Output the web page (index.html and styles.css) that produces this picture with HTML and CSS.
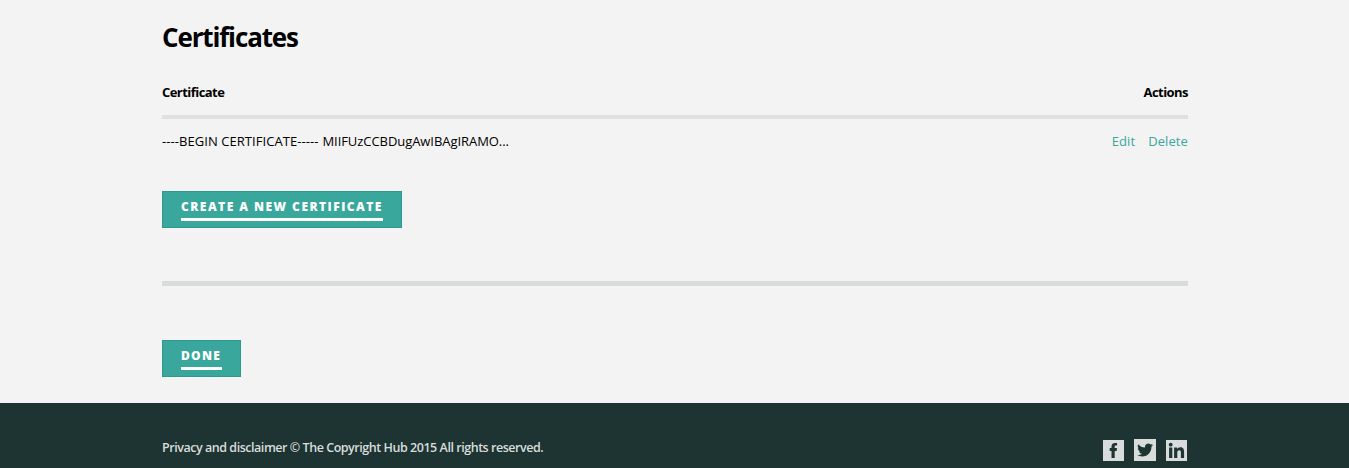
FILE: index.html
```html
<!DOCTYPE html>
<html lang="en">
<head>
<meta charset="utf-8">
<title>Certificates</title>
<link rel="stylesheet" href="styles.css">
</head>
<body>
<main class="content">
  <h1 class="title"><span>Certificates</span></h1>
  <div class="row head"><span class="head-cert">Certificate</span><span class="head-actions">Actions</span></div>
  <div class="row item">
    <span class="cert"><span class="begin">----BEGIN CERTIFICATE-----</span><span class="key">MIIFUzCCBDugAwIBAgIRAMO...</span></span>
    <span class="actions"><a class="edit">Edit</a><a class="delete">Delete</a></span>
  </div>
  <a class="button create"><span class="label">CREATE A NEW CERTIFICATE</span></a>
  <div class="rule"></div>
  <a class="button done"><span class="label">DONE</span></a>
</main>
<footer class="footer">
  <div class="footer-inner">
    <span class="legal">Privacy and disclaimer © The Copyright Hub 2015 All rights reserved.</span>
    <div class="social">
      <svg class="icon" viewBox="0 0 21 21"><path fill="#d8dddc" d="M0 0h21v21H0z"/><path fill="#1d3432" d="M8.5 17.9v-7H6.7V8.1h1.8V6.5c0-2.4 1.2-3.6 3.4-3.6h2.2v2.7h-1.4c-.8 0-1 .4-1 1v1.5h2.3l-.3 2.8h-2v7z"/></svg>
      <svg class="icon twitter" viewBox="0 0 22 22"><path fill="#d8dddc" d="M0 0h22v22H0z"/><path fill="#1d3432" transform="translate(3.2 3.1) scale(.66)" d="M23.95 4.57a10 10 0 0 1-2.82.78 4.96 4.96 0 0 0 2.16-2.73c-.95.56-2 .96-3.13 1.19a4.92 4.92 0 0 0-8.39 4.48C7.69 8.1 4.07 6.13 1.64 3.16a4.92 4.92 0 0 0 1.52 6.57 4.9 4.9 0 0 1-2.23-.61v.06c0 2.39 1.7 4.38 3.95 4.83a5 5 0 0 1-2.21.08 4.94 4.94 0 0 0 4.6 3.42A9.87 9.87 0 0 1 0 19.54a14 14 0 0 0 7.55 2.21c9.05 0 14-7.5 14-13.98l-.02-.64a9.94 9.94 0 0 0 2.42-2.56z"/></svg>
      <svg class="icon" viewBox="0 0 21 21"><path fill="#d8dddc" d="M0 0h21v21H0z"/><g fill="#1d3432"><circle cx="4.7" cy="4.7" r="1.9"/><path d="M3.1 7.6h3.2v10.3H3.1zM8.1 7.6H11v1.5c.6-1 1.6-1.8 3.1-1.8 3.1 0 4 1.9 4 4.7v5.9h-3.2v-5.2c0-1.4-.2-2.5-1.6-2.5-1.5 0-2 1.1-2 2.5v5.2H8.1z"/></g></svg>
    </div>
  </div>
</footer>
</body>
</html>
```
FILE: styles.css
```css
* { box-sizing: border-box; }
body { margin: 0; height: 468px; overflow: hidden; display: flex; flex-direction: column; background: #f3f3f3; color: #000; font: 13px/20px "Open Sans", "Noto Sans", sans-serif; white-space: nowrap; }
.content { width: 1026px; height: 403px; margin-left: 162px; }
.title { margin: 0; padding-top: 17px; height: 82px; font-size: 26px; line-height: 40px; font-weight: 700; letter-spacing: -1.15px; }
.row { display: flex; justify-content: space-between; }
.head { height: 37px; border-bottom: 4px solid #e0e0e0; font-weight: 700; letter-spacing: -.55px; }
.item { height: 72px; padding-top: 12px; }
.cert { display: flex; gap: 4px; }
.begin { letter-spacing: .06px; }
.key { letter-spacing: -.06px; }
.actions { display: flex; gap: 13px; color: #39a79c; letter-spacing: .1px; }
.button { display: block; height: 37px; padding: 5px 18px 0; border: 1px solid #2d988d; background: #39a79c; color: #fff; }
.create { width: 240px; }
.done { width: 79px; }
.label { display: block; height: 24px; border-bottom: 3px solid #fff; font-size: 12px; font-weight: 800; line-height: 20px; letter-spacing: 1.3px; }
.create .label { letter-spacing: 1.47px; }
.rule { height: 5px; margin: 53px 0 54px; background: #d8dcdb; }
.footer { height: 65px; background: #1d3432; color: #d8dddc; }
.footer-inner { display: flex; justify-content: space-between; width: 1026px; margin-left: 162px; padding-top: 35px; }
.legal { font-size: 12.5px; font-weight: 600; letter-spacing: -.46px; }
.social { display: flex; align-items: flex-start; gap: 10px; padding: 2px 1px 0 0; }
.icon { display: block; width: 21px; height: 21px; }
.twitter { width: 22px; height: 22px; margin-top: -1px; }
```
